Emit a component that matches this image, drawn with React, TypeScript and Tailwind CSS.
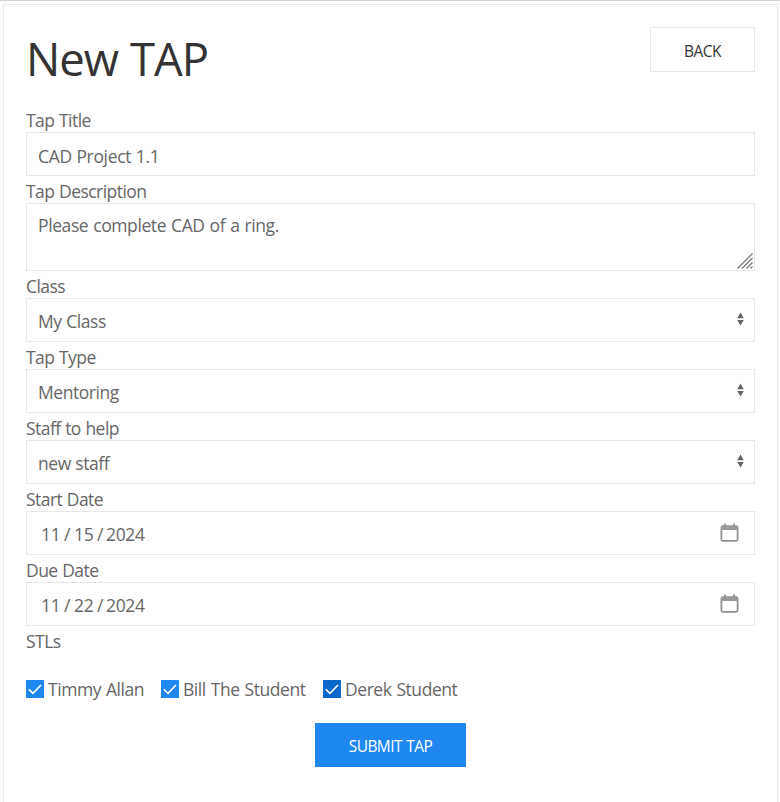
import { ReactNode } from "react"

interface FieldProps {
    label: string,
    children: ReactNode
}

interface StudentProps {
    name: string,
    className: string,
    focused?: boolean
}

function Field({ label, children }: FieldProps) {
    return (
        <div className="w-full">
            <label className="block h-[27px] leading-[30px] tracking-[-0.55px] [word-spacing:0.6px] whitespace-nowrap">{label}</label>
            {children}
        </div>
    )
}

function SelectBox({ value }: { value: string }) {
    return (
        <div className="flex h-[44px] items-center justify-between border border-[#e7e7e7] pl-[11px] pr-[10px]">
            <span className="pt-[3px] tracking-[-0.45px]">{value}</span>
            <svg width="7" height="14" viewBox="0 0 7 14" className="mb-[2px]" fill="#666">
                <path d="M3.5 0.6 6.8 6.2H0.2zM3.5 13.4 0.2 8h6.6z" />
            </svg>
        </div>
    )
}

function DateBox({ value }: { value: string[] }) {
    return (
        <div className="flex h-[44px] items-center justify-between border border-[#e7e7e7] pl-[14px] pr-[15px]">
            <div className="flex pt-[2px]">
                <span className="w-[23px]">{value[0]}</span>
                <span className="w-[10px]">/</span>
                <span className="w-[23px]">{value[1]}</span>
                <span className="w-[9px]">/</span>
                <span>{value[2]}</span>
            </div>
            <svg width="19" height="19" viewBox="0 0 19 19" className="mb-px" fill="none">
                <rect x="1.4" y="3.2" width="16.2" height="14.6" rx="1.5" stroke="#919191" strokeWidth="1.8" />
                <path d="M1 3h17v4H1z" fill="#999" />
                <path d="M5 0.5v3M14 0.5v3" stroke="#919191" strokeWidth="1.8" />
            </svg>
        </div>
    )
}

function Student({ name, className, focused }: StudentProps) {
    return (
        <label className={`flex items-center whitespace-nowrap ${className}`}>
            <span className={`mr-[4px] flex size-[18px] items-center justify-center ${focused ? "bg-[#0867cb]" : "bg-[#1e87f0]"}`}>
                <svg width="14" height="12" viewBox="0 0 14 12" fill="none" stroke="#fff" strokeWidth="1.6">
                    <path d="M0.8 6.3 5 10.3 13 2" />
                </svg>
            </span>
            <span className="leading-[20px] tracking-[-0.44px] [word-spacing:0.8px]">{name}</span>
        </label>
    )
}

export default function App() {
    return (
        <div className="h-[802px] overflow-hidden border-t border-[#cfcfcf] bg-white px-[3px] pt-[3px] font-['Open_Sans','Noto_Sans',sans-serif] text-[17.5px] tracking-[-0.35px] [word-spacing:0.5px] text-[#666]">
            <div className="h-[810px] w-[775px] border border-[#e9e9e9] px-[22px] pt-[22px] shadow-[0_0_3px_rgba(0,0,0,0.05)]">
                <div className="flex h-[78px] w-[729px] items-start justify-between">
                    <h1 className="text-[45.5px] leading-[62px] tracking-[-1px] [word-spacing:1px] text-[#333]">New TAP</h1>
                    <button className="h-[45px] w-[105px] border border-[#e7e7e7] pt-[4px] text-[15.5px] tracking-[-0.5px] text-[#333]">BACK</button>
                </div>

                <form className="w-[729px]">
                    <Field label="Tap Title">
                        <div className="flex h-[44px] items-center border border-[#e7e7e7] px-[11px]">
                            <span className="pt-[4px]">CAD Project 1.1</span>
                        </div>
                    </Field>
                    <Field label="Tap Description">
                        <div className="flex h-[68px] items-end justify-between border border-[#e7e7e7] pl-[11px] pr-px">
                            <p className="h-full pt-[8px] tracking-[-0.4px] [word-spacing:0.8px]">Please complete CAD of a ring.</p>
                            <svg width="16" height="16" viewBox="0 0 16 16" className="mb-px" stroke="#777" strokeWidth="1.3">
                                <path d="M0.5 15.5 15.5 0.5M5 15.5 15.5 5M9.5 15.5l6-6M13.5 15.5l2-2" />
                            </svg>
                        </div>
                    </Field>
                    <Field label="Class">
                        <SelectBox value="My Class" />
                    </Field>
                    <Field label="Tap Type">
                        <SelectBox value="Mentoring" />
                    </Field>
                    <Field label="Staff to help">
                        <SelectBox value="new staff" />
                    </Field>
                    <Field label="Start Date">
                        <DateBox value={["11", "15", "2024"]} />
                    </Field>
                    <Field label="Due Date">
                        <DateBox value={["11", "22", "2024"]} />
                    </Field>
                    <Field label="STLs">
                        <div className="flex h-[70px] items-center pt-px">
                            <Student name="Timmy Allan" className="w-[135px]" />
                            <Student name="Bill The Student" className="w-[162px]" />
                            <Student name="Derek Student" className="" focused />
                        </div>
                    </Field>
                    <button type="button" className="mx-auto block h-[44px] w-[151px] bg-[#1e87f0] pt-[4px] text-[15.5px] tracking-[-0.6px] [word-spacing:1px] text-white">SUBMIT TAP</button>
                </form>
            </div>
        </div>
    )
}
